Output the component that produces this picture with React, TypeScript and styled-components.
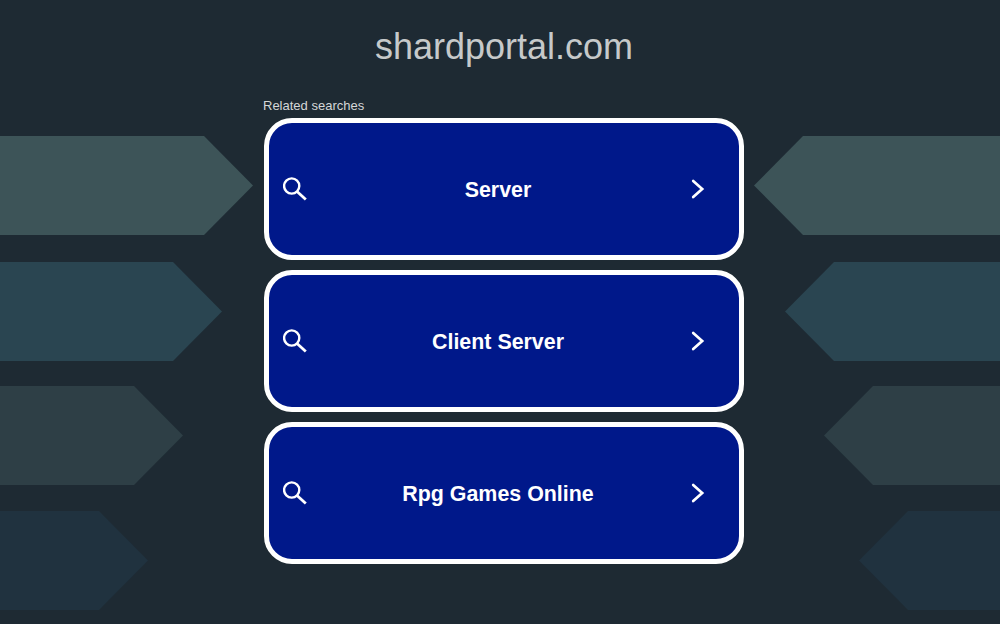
import React from 'react';
import styled, { createGlobalStyle } from 'styled-components';

const GlobalStyle = createGlobalStyle`
  html, body {
    margin: 0;
    padding: 0;
    background: #1e2a33;
    font-family: 'Liberation Sans', Arial, sans-serif;
  }
`;

const Page = styled.div`
  display: grid;
  grid-template-columns: 264px 480px 256px;
  width: 1000px;
  height: 624px;
  overflow: hidden;
  background: #1e2a33;
`;

const ArrowColumn = styled.div<{ $side: 'left' | 'right' }>`
  display: flex;
  flex-direction: column;
  align-items: ${props => (props.$side === 'left' ? 'flex-start' : 'flex-end')};
  padding-top: 136px;
`;

const Arrow = styled.div<{ $side: 'left' | 'right'; $width: number; $color: string; $gap: number }>`
  width: ${props => props.$width}px;
  height: 99px;
  margin-bottom: ${props => props.$gap}px;
  background: ${props => props.$color};
  clip-path: ${props =>
    props.$side === 'left'
      ? 'polygon(0 0, calc(100% - 49px) 0, 100% 50%, calc(100% - 49px) 100%, 0 100%)'
      : 'polygon(49px 0, 100% 0, 100% 100%, 49px 100%, 0 50%)'};
`;

const Center = styled.main`
  display: flex;
  flex-direction: column;
`;

const Title = styled.h1`
  margin: 0;
  padding-top: 26px;
  font-size: 36px;
  line-height: 41px;
  font-weight: 400;
  text-align: center;
  color: #c6c9ca;
`;

const Caption = styled.div`
  margin: 31px 0 5px -1px;
  font-size: 13px;
  line-height: 15px;
  color: #d5d7d8;
`;

const ResultList = styled.div`
  display: flex;
  flex-direction: column;
  gap: 10px;
`;

const ResultCard = styled.a`
  display: flex;
  align-items: center;
  box-sizing: border-box;
  height: 142px;
  padding: 0 30px 0 14px;
  border: 5px solid #fff;
  border-radius: 28px;
  background: #00188a;
  color: #fff;
  text-decoration: none;
`;

const ResultLabel = styled.span`
  flex: 1;
  padding-top: 2px;
  text-align: center;
  font-size: 21.4px;
  font-weight: 700;
`;

const SearchIcon = () => (
  <svg width="24" height="24" viewBox="0 0 24 24" fill="none" stroke="#fff" strokeWidth="2.4">
    <circle cx="8.7" cy="9" r="7.6" />
    <path d="M14 14.500l8.800 8" strokeWidth="2.8" />
  </svg>
);

const ChevronIcon = () => (
  <svg width="20" height="24" viewBox="0 0 20 24" fill="none" stroke="#fff" strokeWidth="2.7" strokeLinecap="round">
    <path d="M4.200 4l9 8-9 8" />
  </svg>
);

const arrows = [
  { left: 253, right: 246, color: '#3d5458', gap: 27 },
  { left: 222, right: 215, color: '#2a4551', gap: 25 },
  { left: 183, right: 176, color: '#2e3f46', gap: 26 },
  { left: 148, right: 141, color: '#20323f', gap: 0 },
];

const results = ['Server', 'Client Server', 'Rpg Games Online'];

const App: React.FC = () => (
  <>
    <GlobalStyle />
    <Page>
      <ArrowColumn $side="left">
        {arrows.map(a => (
          <Arrow key={a.left} $side="left" $width={a.left} $color={a.color} $gap={a.gap} />
        ))}
      </ArrowColumn>
      <Center>
        <Title>shardportal.com</Title>
        <Caption>Related searches</Caption>
        <ResultList>
          {results.map(r => (
            <ResultCard key={r} href="#">
              <SearchIcon />
              <ResultLabel>{r}</ResultLabel>
              <ChevronIcon />
            </ResultCard>
          ))}
        </ResultList>
      </Center>
      <ArrowColumn $side="right">
        {arrows.map(a => (
          <Arrow key={a.right} $side="right" $width={a.right} $color={a.color} $gap={a.gap} />
        ))}
      </ArrowColumn>
    </Page>
  </>
);

export default App;
